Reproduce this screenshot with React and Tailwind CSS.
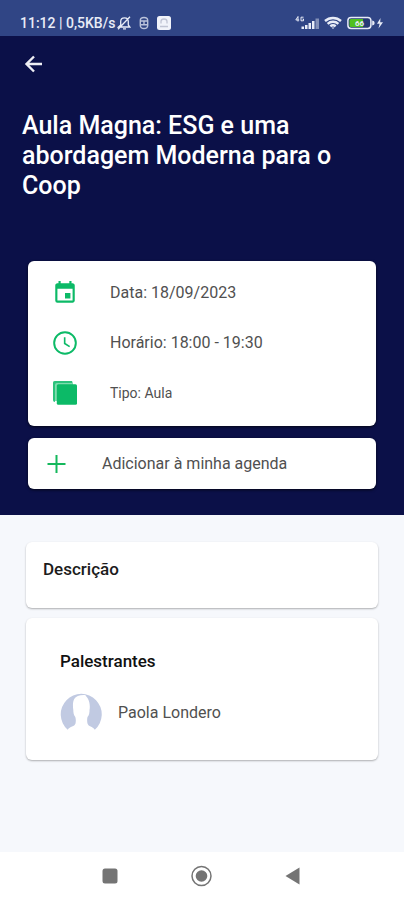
import React from 'react';

const details = [
  { icon: CalendarIcon, text: 'Data: 18/09/2023', size: 'text-base' },
  { icon: ClockIcon, text: 'Horário: 18:00 - 19:30', size: 'text-base' },
  { icon: StackIcon, text: 'Tipo: Aula', size: 'text-sm' },
];

function CalendarIcon() {
  return (
    <svg viewBox="0 0 24 24" className="h-[26px] w-[26px] shrink-0" fill="#0cba67">
      <path d="M17 12h-5v5h5v-5zM16 1v2H8V1H6v2H5c-1.110 0-1.990.9-1.990 2L3 19a2 2 0 0 0 2 2h14c1.100 0 2-.9 2-2V5c0-1.100-.9-2-2-2h-1V1h-2zm3 18H5V8h14v11z" />
    </svg>
  );
}

function ClockIcon() {
  return (
    <svg viewBox="0 0 24 24" className="h-[26px] w-[26px] shrink-0" fill="none" stroke="#0cba67">
      <circle cx="12" cy="12" r="10" strokeWidth="1.800" />
      <path d="M11.700 6.800v5.700l4.600 2.900" strokeWidth="1.500" />
    </svg>
  );
}

function StackIcon() {
  return (
    <svg viewBox="0 0 26 26" className="h-[26px] w-[26px] shrink-0">
      <rect x="1" y="1" width="20" height="20" rx="2" fill="#7fdcae" />
      <path d="M1 20V3a2 2 0 0 1 2-2h17v2H5a2 2 0 0 0-2 2v17a2 2 0 0 1-2-2z" fill="#2cc27c" />
      <rect x="4.800" y="4.200" width="20.200" height="20.600" rx="1.500" fill="#0cba67" />
    </svg>
  );
}

function StatusBar() {
  return (
    <div className="flex h-9 items-end justify-between bg-[#304585] px-5 pb-[3px] text-[#e8ecf7]">
      <div className="flex items-center gap-0.5">
        <span className="text-sm leading-5 font-medium">11:12 | 0,5KB/s</span>
        {/* muted bell */}
        <svg viewBox="0 0 14 14" className="h-3.5 w-3.5" fill="none" stroke="currentColor" strokeWidth="1.300">
          <path d="M1.500 11h11.300L11.300 9V5.500C11.300 3.300 9.700 1.800 7.500 1.800S3.700 3.300 3.700 5.500V9L1.500 11zM6 12.900h3M1 13.300 13 .8" />
        </svg>
        <svg viewBox="0 0 14 14" className="ml-1 h-3.5 w-3.5" fill="none" stroke="currentColor" strokeWidth="1.400" opacity=".75">
          <path d="M3.300 4.500C3.300 2.500 4.800 1.500 7 1.500s3.700 1 3.700 3v5c0 2-1.500 3-3.700 3s-3.700-1-3.700-3zM3 5h8M3 8.700h8M7 5v3.500" />
        </svg>
        <svg viewBox="0 0 14 14" className="ml-1 h-3.5 w-3.5">
          <rect width="14" height="14" rx="2.500" fill="#f1f3fa" />
          <path d="M4 7.500V5.500a3 2.500 0 0 1 6 0v2M3 10.500h8" fill="none" stroke="#c0c4d4" strokeWidth="1.300" />
        </svg>
      </div>
      <div className="flex h-5 items-center gap-1">
        <svg viewBox="0 0 25 14" className="h-3.5 w-[25px]" fill="currentColor">
          <path d="M3 .5v5M3 .5.8 4h3.400M8.500 1.200H6v3.600h2.500V3H7.500" fill="none" stroke="currentColor" strokeWidth="1" />
          <path d="M6.500 10.500h2.500V13H6.500zM10 9h2.500v4H10zM13.500 7H16v6h-2.500zM17 5h2.500v8H17z" />
          <path d="M20.500 2.500H24V13h-3.500z" opacity=".45" />
        </svg>
        <svg viewBox="0 0 18 14" className="h-3.5 w-[18px]" fill="none" stroke="currentColor" strokeWidth="2.400">
          <path d="M1 5C5.500.9 12.500.9 17 5M3.600 7.800c3-2.700 7.800-2.700 10.800 0M6.300 10.300c1.600-1.300 3.800-1.300 5.400 0" />
          <path d="M7.500 11.500h3L9 13z" fill="currentColor" stroke="none" />
        </svg>
        <svg viewBox="0 0 38 14" className="h-3.5 w-[38px]">
          <rect x="1.900" y="1.400" width="23" height="11" rx="3.200" fill="#263a75" stroke="#e8ecf7" strokeWidth="1.500" />
          <path d="M5 3h12v8H5a1.500 1.500 0 0 1-1.500-1.500v-5A1.500 1.500 0 0 1 5 3z" fill="#4fc01f" />
          <path d="M26.200 4.500a2.500 2.500 0 0 1 0 5z" fill="#e8ecf7" />
          <text x="9" y="10" fontSize="8" fontWeight="700" fill="#e8ecf7">66</text>
          <path d="M34.500 2 31 7.800h2.600L32.500 12.500l4.500-6.300h-2.800z" fill="#e8ecf7" />
        </svg>
      </div>
    </div>
  );
}

function Avatar() {
  return (
    <svg viewBox="0 0 42 42" className="h-[42px] w-[42px] shrink-0">
      <path
        d="M7.700 37.700A20.500 20.500 0 1 1 34.800 37.700C32.500 34 28.500 35 27.500 31.500c-.5-2-.5-4.500 0-6.500 1.800-2 2-4.500 2-7 .8-4 0-8.500-1.700-11.500-.8-1.500-1.800-2.300-2.600-3.500-5-.4-9.200.8-11 4-1.600 3-1.400 7.500-.9 11 0 2.500.4 5 2 7 .7 2 .6 4.500.2 6.500-1 3.500-5.500 2.500-7.800 6.200z"
        fill="#c1cae2"
      />
    </svg>
  );
}

function SystemNav() {
  return (
    <nav className="grid h-12 grid-cols-[1fr_auto_1fr] items-center gap-[66px] bg-white">
      <button aria-label="Recentes" className="justify-self-end">
        <svg viewBox="0 0 26 26" className="h-[26px] w-[26px]">
          <rect x="5.500" y="5.500" width="15" height="15" rx="2.500" fill="#747474" />
        </svg>
      </button>
      <button aria-label="Início">
        <svg viewBox="0 0 26 26" className="h-[26px] w-[26px]">
          <circle cx="12.500" cy="13" r="9.500" fill="none" stroke="#747474" strokeWidth="1.500" />
          <circle cx="12.500" cy="13" r="5.800" fill="#747474" />
        </svg>
      </button>
      <button aria-label="Voltar" className="justify-self-start">
        <svg viewBox="0 0 26 26" className="h-[26px] w-[26px]">
          <path d="M18.500 4.500v17L4.500 13z" fill="#747474" />
        </svg>
      </button>
    </nav>
  );
}

export default function App() {
  return (
    <div className="flex min-h-screen flex-col bg-[#f6f8fc] font-[Roboto,sans-serif]">
      <StatusBar />

      <header className="bg-[#0b1048] px-7 pb-[26px]">
        <button aria-label="Voltar" className="-ml-2 flex h-14 w-7 items-center justify-center text-[#eeeef4]">
          <svg viewBox="0 0 20 20" className="h-5 w-5" fill="none" stroke="currentColor" strokeWidth="2.400">
            <path d="M18 10H3M10 2.500 2.500 10l7.500 7.500" />
          </svg>
        </button>

        <h1 className="mt-[19px] -ml-1.5 text-[25px] leading-[30px] font-medium text-white">
          Aula Magna: ESG e uma abordagem Moderna para o Coop
        </h1>

        <ul className="mt-[60px] rounded-md bg-white pt-[7px] pb-2 shadow-[0_1px_3px_rgba(0,0,0,0.7)]">
          {details.map(({ icon: Icon, text, size }) => (
            <li key={text} className="flex h-[50px] items-center gap-8 px-6 text-[#505050]">
              <Icon />
              <span className={size}>{text}</span>
            </li>
          ))}
        </ul>

        <button className="mt-3 flex h-[51px] w-full items-center gap-8 rounded-md bg-white px-4 text-base text-[#505050] shadow-[0_1px_3px_rgba(0,0,0,0.7)]">
          <svg viewBox="0 0 26 26" className="h-[26px] w-[26px]" fill="none" stroke="#15b85c" strokeWidth="2">
            <path d="M12.500 4v18M3.500 13h18" />
          </svg>
          Adicionar à minha agenda
        </button>
      </header>

      <main className="flex flex-1 flex-col gap-2.5 px-[26px] pt-[27px]">
        <section className="rounded-md bg-white px-[17px] pt-[17px] pb-[29px] shadow-[0_1px_2px_rgba(0,0,0,0.3)]">
          <h2 className="text-[17px] leading-5 font-medium text-[#1c1c1c]">Descrição</h2>
        </section>

        <section className="rounded-md bg-white px-[34px] pt-[33px] pb-[26px] shadow-[0_1px_2px_rgba(0,0,0,0.3)]">
          <h2 className="text-[17px] leading-5 font-medium text-[#111]">Palestrantes</h2>
          <div className="mt-[21px] flex items-center gap-4">
            <Avatar />
            <span className="text-base text-[#505050]">Paola Londero</span>
          </div>
        </section>
      </main>

      <SystemNav />
    </div>
  );
}
